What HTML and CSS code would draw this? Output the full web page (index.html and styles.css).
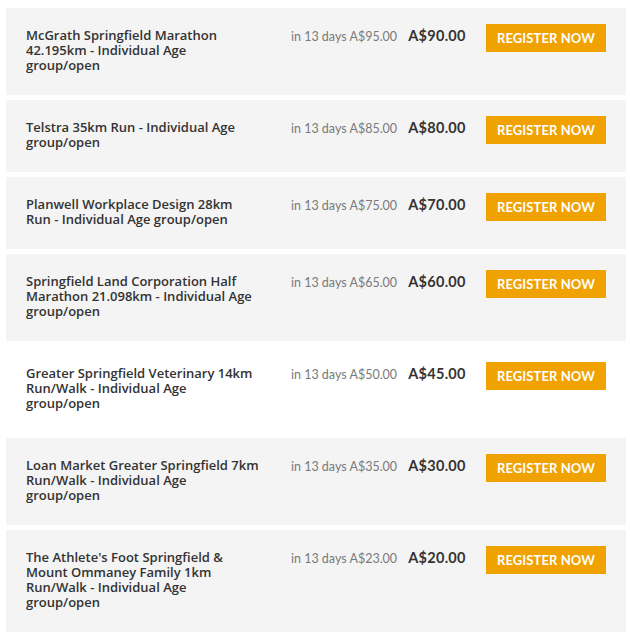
FILE: index.html
```html
<!DOCTYPE html>
<html>
<head>
<meta charset="utf-8">
<link rel="stylesheet" href="styles.css">
</head>
<body>
<div class="list">
  <div class="row">
    <div class="title">McGrath Springfield Marathon 42.195km - Individual Age group/open</div>
    <div class="price"><span class="when">in 13 days A$95.00</span><span class="now">A$90.00</span></div>
    <a class="btn">Register now</a>
  </div>
  <div class="row">
    <div class="title">Telstra 35km Run - Individual Age group/open</div>
    <div class="price"><span class="when">in 13 days A$85.00</span><span class="now">A$80.00</span></div>
    <a class="btn">Register now</a>
  </div>
  <div class="row">
    <div class="title">Planwell Workplace Design 28km Run - Individual Age group/open</div>
    <div class="price"><span class="when">in 13 days A$75.00</span><span class="now">A$70.00</span></div>
    <a class="btn">Register now</a>
  </div>
  <div class="row">
    <div class="title">Springfield Land Corporation Half Marathon 21.098km - Individual Age group/open</div>
    <div class="price"><span class="when">in 13 days A$65.00</span><span class="now">A$60.00</span></div>
    <a class="btn">Register now</a>
  </div>
  <div class="row row-white">
    <div class="title">Greater Springfield Veterinary 14km Run/Walk - Individual Age group/open</div>
    <div class="price"><span class="when">in 13 days A$50.00</span><span class="now">A$45.00</span></div>
    <a class="btn">Register now</a>
  </div>
  <div class="row">
    <div class="title">Loan Market Greater Springfield 7km Run/Walk - Individual Age group/open</div>
    <div class="price"><span class="when">in 13 days A$35.00</span><span class="now">A$30.00</span></div>
    <a class="btn">Register now</a>
  </div>
  <div class="row">
    <div class="title">The Athlete's Foot Springfield &amp; Mount Ommaney Family 1km Run/Walk - Individual Age group/open</div>
    <div class="price"><span class="when">in 13 days A$23.00</span><span class="now">A$20.00</span></div>
    <a class="btn">Register now</a>
  </div>
</div>
</body>
</html>
```
FILE: styles.css
```css
html, body {
  margin: 0;
  padding: 0;
  background: #ffffff;
}
body {
  font-family: Lato, "Liberation Sans", sans-serif;
  color: #333333;
}
.list {
  margin: 8px 4px 0 6px;
  display: flex;
  flex-direction: column;
  gap: 5px;
}
.row {
  background: #f4f4f4;
  display: flex;
  align-items: flex-start;
  padding: 20px 20px 22px 20px;
}
.row-white {
  background: #ffffff;
}
.title {
  flex: 0 0 234px;
  font-family: "Open Sans", Lato, sans-serif;
  font-size: 13px;
  line-height: 15px;
  font-weight: 600;
  color: #333333;
}
.price {
  margin-left: 31px;
  display: flex;
  align-items: baseline;
  gap: 11px;
  line-height: 16px;
}
.when {
  font-size: 12.5px;
  color: #7a7a7a;
}
.now {
  font-size: 14.5px;
  font-weight: 700;
  letter-spacing: 0.3px;
  color: #333333;
}
.btn {
  margin-left: auto;
  margin-top: -4px;
  width: 120px;
  height: 28px;
  background: #f0a202;
  color: #ffffff;
  font-size: 13px;
  font-weight: 700;
  text-transform: uppercase;
  display: flex;
  align-items: center;
  justify-content: center;
  letter-spacing: 0.1px;
}
```
